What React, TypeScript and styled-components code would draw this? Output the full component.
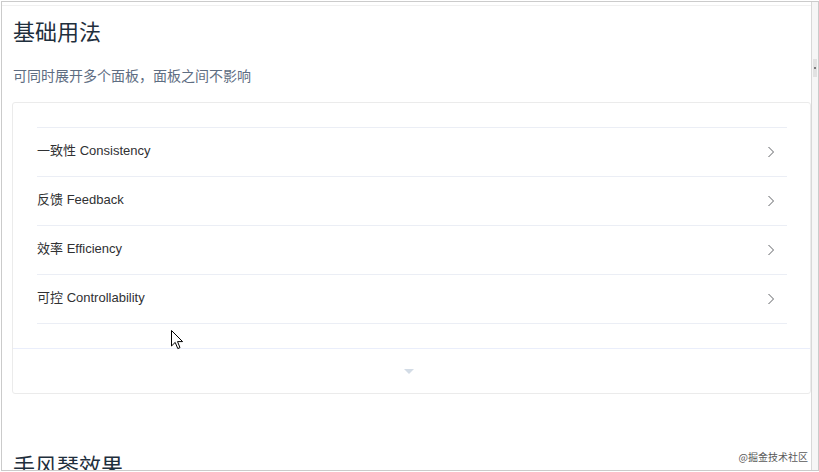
import React from "react";
import styled, { createGlobalStyle } from "styled-components";

const GlobalStyle = createGlobalStyle`
  html, body {
    margin: 0;
    padding: 0;
    background: #ffffff;
  }
  body {
    font-family: "Liberation Sans", "Noto Sans CJK SC", sans-serif;
    -webkit-font-smoothing: antialiased;
  }
`;

const panels = [
  { zh: "一致性", en: "Consistency" },
  { zh: "反馈", en: "Feedback" },
  { zh: "效率", en: "Efficiency" },
  { zh: "可控", en: "Controllability" },
];

const ArrowRight = () => (
  <svg width="8" height="12" viewBox="0 0 8 12" fill="none">
    <polyline points="1.5,1 6.5,6 1.5,11" stroke="#606266" strokeWidth="1" />
  </svg>
);

const CaretBottom = () => (
  <svg width="12" height="7" viewBox="0 0 12 7">
    <polygon points="1,1 11,1 6,6" fill="#d3dce6" />
  </svg>
);

const Cursor = () => (
  <svg width="13" height="20" viewBox="0 0 13 20">
    <path
      d="M0.5 0.5 L0.5 16 L4.2 12.4 L6.8 18.6 L9 17.6 L6.5 11.6 L11.6 11.6 Z"
      fill="#ffffff"
      stroke="#000000"
      strokeWidth="1"
      strokeLinejoin="miter"
    />
  </svg>
);

const App = () => {
  return (
    <>
      <GlobalStyle />
      <Window>
        <Content>
          <Heading>基础用法</Heading>
          <Description>可同时展开多个面板，面板之间不影响</Description>
          <DemoBlock>
            <Source>
              <Collapse>
                {panels.map((p) => (
                  <Item key={p.en}>
                    <ItemTitle>
                      {p.zh} {p.en}
                    </ItemTitle>
                    <ArrowRight />
                  </Item>
                ))}
              </Collapse>
            </Source>
            <Control>
              <CaretBottom />
            </Control>
          </DemoBlock>
          <Heading $spaced>手风琴效果</Heading>
          <PointerLayer>
            <Cursor />
          </PointerLayer>
        </Content>
        <ScrollStrip>
          <ScrollThumb />
        </ScrollStrip>
        <Watermark>@掘金技术社区</Watermark>
      </Window>
    </>
  );
};

export default App;

const Window = styled.div`
  position: relative;
  display: flex;
  margin: 1px 0 0 1px;
  width: 818px;
  height: 470px;
  box-sizing: border-box;
  border: 1px solid #cbcbcb;
  overflow: hidden;
  background: #ffffff;
`;

const Content = styled.div`
  position: relative;
  flex: 1;
  min-width: 0;
  padding: 8px 0 0 10px;
  box-sizing: border-box;
  overflow: hidden;
  border-top: 1px solid #f0f0f0;
  margin-top: 3px;
`;

const Heading = styled.h2<{ $spaced?: boolean }>`
  margin: ${(p) => (p.$spaced ? "54px" : "0")} 0 0 1px;
  font-family: "Noto Sans CJK SC", sans-serif;
  font-size: 22px;
  font-weight: 400;
  line-height: 33px;
  color: #1f2f3d;
`;

const Description = styled.p`
  margin: 17px 0 0 1px;
  font-family: "Noto Sans CJK SC", sans-serif;
  font-size: 14px;
  line-height: 22px;
  color: #5e6d82;
`;

const DemoBlock = styled.div`
  margin-top: 16px;
  border: 1px solid #ebebeb;
  border-radius: 3px;
  box-sizing: border-box;
`;

const Source = styled.div`
  padding: 24px 23px 24px 24px;
`;

const Collapse = styled.div`
  border-top: 1px solid #ebeef5;
`;

const Item = styled.div`
  display: flex;
  align-items: center;
  justify-content: space-between;
  height: 48px;
  padding-right: 12px;
  border-bottom: 1px solid #ebeef5;
`;

const ItemTitle = styled.span`
  font-family: "Liberation Sans", "Noto Sans CJK SC", sans-serif;
  font-size: 13px;
  line-height: 16px;
  margin-top: -2px;
  color: #303133;
`;

const Control = styled.div`
  display: flex;
  align-items: center;
  justify-content: center;
  height: 44px;
  border-top: 1px solid #eaeefb;
  padding-right: 6px;
`;

const PointerLayer = styled.div`
  position: absolute;
  left: 169px;
  top: 324px;
  line-height: 0;
`;

const ScrollStrip = styled.div`
  position: relative;
  width: 6px;
  border-left: 1px solid #d8d8d8;
  background: #f6f6f6;
`;

const ScrollThumb = styled.div`
  position: absolute;
  left: 1px;
  top: 57px;
  width: 4px;
  height: 18px;
  background: #e2e2e2;

  &::after {
    content: "";
    position: absolute;
    left: 1px;
    top: 8px;
    width: 2px;
    height: 2px;
    background: #7a7a7a;
  }
`;

const Watermark = styled.span`
  position: absolute;
  right: 10px;
  bottom: 6px;
  font-family: "Noto Sans CJK SC", sans-serif;
  font-size: 10px;
  color: #5a5a5a;
  text-shadow: 0 0 2px #ffffff;
`;
